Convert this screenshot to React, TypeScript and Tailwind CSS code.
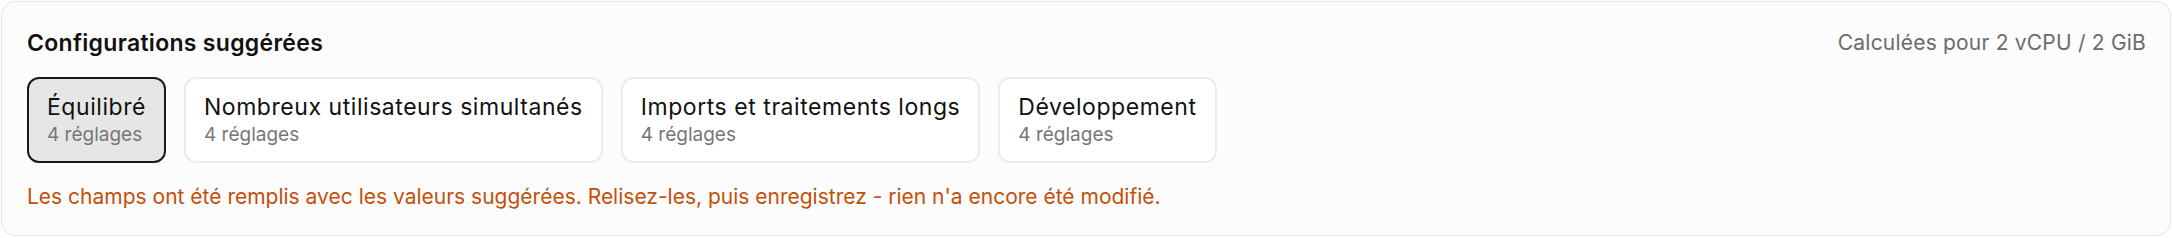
import React from "react";

const presets = [
  { name: "Équilibré", count: "4 réglages", active: true },
  { name: "Nombreux utilisateurs simultanés", count: "4 réglages", active: false },
  { name: "Imports et traitements longs", count: "4 réglages", active: false },
  { name: "Développement", count: "4 réglages", active: false },
];

export default function App() {
  return (
    <div className="p-px bg-white" style={{ fontFamily: "Inter, 'Noto Sans', sans-serif" }}>
      <div className="rounded-[14px] border border-[#e6e6e6] bg-[#fcfcfc] pt-[26px] pb-[24px] pl-[25px] pr-[24px]">
        <div className="flex items-center justify-between">
          <h2 className="text-[23px] leading-[30px] font-semibold tracking-[0.3px] text-[#111111]">Configurations suggérées</h2>
          <span className="text-[21px] leading-[30px] tracking-[0.2px] text-[#6b6b6b]">Calculées pour 2 vCPU / 2 GiB</span>
        </div>
        <div className="mt-[19px] flex gap-[18px]">
          {presets.map((p) => (
            <button
              key={p.name}
              className={
                p.active
                  ? "flex flex-col items-start rounded-[12px] border-2 border-[#1a1a1a] bg-[#e6e6e6] px-[18px] py-[14px] text-left"
                  : "flex flex-col items-start rounded-[12px] border-2 border-[#ececec] bg-white px-[18px] py-[14px] text-left"
              }
            >
              <span className="text-[23px] leading-[28px] tracking-[0.55px] text-[#111111]">{p.name}</span>
              <span className="mt-[2px] text-[19px] leading-[24px] text-[#777777]">{p.count}</span>
            </button>
          ))}
        </div>
        <p className="mt-[20px] text-[21px] leading-[28px] text-[#c2500a]">
          Les champs ont été remplis avec les valeurs suggérées. Relisez-les, puis enregistrez - rien n'a encore été modifié.
        </p>
      </div>
    </div>
  );
}
